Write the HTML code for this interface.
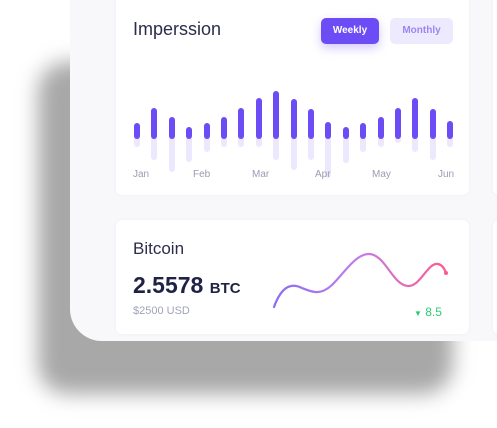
<html><head><style>
body{margin:0;width:497px;height:428px;background:#fff;position:relative;overflow:hidden;font-family:"Liberation Sans",sans-serif}
.sh{position:absolute;left:38px;top:62px;width:415px;height:332px;background:#a8a8a8;border-radius:30px;filter:blur(10px)}
.panel{position:absolute;left:70px;top:-30px;width:460px;height:371px;background:#f8f8fb;border-radius:32px}
.card{position:absolute;background:#fff;border-radius:6px;box-shadow:0 0 3px rgba(0,0,0,.05)}
.t{position:absolute;color:#2b2d4a}
.b{position:absolute;width:6px;border-radius:3px;background:#6c4cf5}
.f{position:absolute;width:6px;border-radius:3px;background:#ece8fd}
.m{position:absolute;top:169px;font-size:10px;color:#9a9cb0}
</style></head><body>
<div class="sh"></div>
<div class="panel"></div>
<div class="card" style="left:116px;top:-5px;width:353px;height:200px"></div>
<div class="card" style="left:493px;top:-5px;width:20px;height:200px"></div>
<div class="card" style="left:116px;top:220px;width:353px;height:114px"></div>
<div class="card" style="left:493px;top:220px;width:20px;height:114px"></div>
<div class="t" style="left:133px;top:19px;font-size:18px">Imperssion</div>
<div style="position:absolute;left:321px;top:18px;width:58px;height:26px;background:#6c4cf5;border-radius:5px;color:#fff;font-size:10px;font-weight:bold;text-align:center;line-height:26px;box-shadow:0 4px 10px rgba(108,76,245,.3)">Weekly</div>
<div style="position:absolute;left:390px;top:18px;width:63px;height:26px;background:#eeeafd;border-radius:5px;color:#9c87f0;font-size:10px;font-weight:bold;text-align:center;line-height:26px">Monthly</div>
<div id="bars"></div>
<div class="m" style="left:133px">Jan</div><div class="m" style="left:193px">Feb</div><div class="m" style="left:252px">Mar</div><div class="m" style="left:315px">Apr</div><div class="m" style="left:372px">May</div><div class="m" style="left:438px">Jun</div>
<div class="t" style="left:133px;top:239px;font-size:17px">Bitcoin</div>
<div class="t" style="left:133px;top:272px;font-size:23px;font-weight:bold;color:#1f2244">2.5578 <span style="font-size:15px">BTC</span></div>
<div class="t" style="left:133px;top:305px;font-size:11px;color:#a0a3b8">$2500 USD</div>
<div class="t" style="left:414px;top:305px;font-size:12px;color:#2ecc71"><span style="font-size:8px">▼</span> 8.5</div>
<svg style="position:absolute;left:0;top:0" width="497" height="428"><defs><linearGradient id="g" x1="0" x2="1"><stop offset="0" stop-color="#8c6cf5"/><stop offset=".5" stop-color="#c27ee8"/><stop offset="1" stop-color="#ff5b8a"/></linearGradient></defs>
<path d="M274,307 C282,285 292,283 302,288 C312,292 320,296 332,285 C345,272 355,255 368,254 C385,253 392,285 408,286 C420,287 428,262 438,264 C443,265 445,270 446,273" fill="none" stroke="url(#g)" stroke-width="2.2" stroke-linecap="round"/><circle cx="446" cy="273" r="2" fill="#ff5b8a"/></svg>
<script>
var t=[123,108,117,127,123,117,108,98,91,99,109,122,127,123,117,108,98,109,121],l=[147,160,172,162,152,147,147,147,160,170,160,178,163,152,147,143,152,160,147],h='';
for(var i=0;i<19;i++){var x=134+i*17.4;h+='<div class="f" style="left:'+x+'px;top:136px;height:'+(l[i]-136)+'px"></div><div class="b" style="left:'+x+'px;top:'+t[i]+'px;height:'+(139-t[i])+'px"></div>';}
document.getElementById('bars').innerHTML=h;
</script>
</body></html>
